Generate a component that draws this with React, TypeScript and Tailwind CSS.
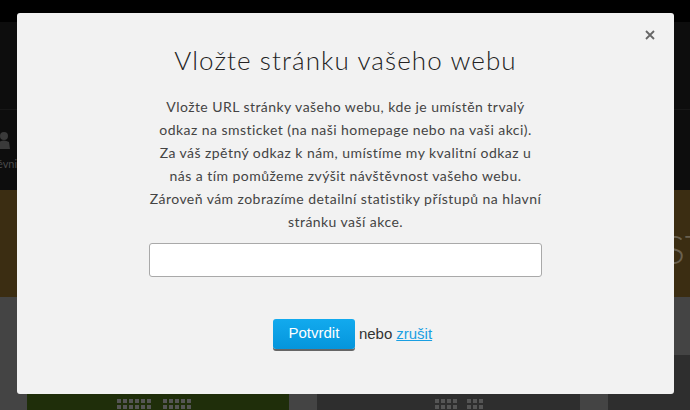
import React from "react";

const Dots = ({ cols, rows }: { cols: number; rows: number }) => (
  <div className="flex flex-col gap-[2px]">
    {Array.from({ length: rows }).map((_, r) => (
      <div key={r} className="flex gap-[2px]">
        {Array.from({ length: cols }).map((_, c) => (
          <div key={c} className="w-[4px] h-[4px] bg-[#555]" />
        ))}
      </div>
    ))}
  </div>
);

export default function App() {
  return (
    <div className="relative w-[690px] h-[410px] overflow-hidden bg-black" style={{ fontFamily: "Lato, 'Open Sans', sans-serif" }}>
      {/* background page */}
      <div className="flex flex-col w-full h-full">
        <div className="h-[22px] bg-black shrink-0" />
        <div className="h-[88px] bg-[#0d0d0d] border-b border-[#171717] shrink-0" />
        <div className="h-[80px] bg-[#0d0d0d] shrink-0 flex flex-col pt-[21px] pl-0">
          <svg width="12" height="18" viewBox="0 0 12 18" className="ml-[-2px]">
            <circle cx="6" cy="5" r="4" fill="#3a3a3a" />
            <path d="M0 18 L1 11 Q6 8 11 11 L12 18 Z" fill="#3a3a3a" />
          </svg>
          <span className="text-[11px] text-[#4a4a4a] mt-[9px] ml-[-3px] leading-none">évni</span>
        </div>
        <div className="h-[107px] bg-[#3b2d12] shrink-0 flex items-center justify-end">
          <span className="text-[40px] text-[#6a6150] mr-[-18px] font-light leading-none mt-[10px]">ST</span>
        </div>
        <div className="flex-1 bg-[#444] flex gap-[28px] pl-[27px] pt-[58px]">
          <div className="w-[262px] bg-[#1f2e0a] flex items-end pl-[90px] pb-[1px] gap-[12px]">
            <Dots cols={6} rows={2} />
            <Dots cols={5} rows={2} />
          </div>
          <div className="w-[263px] bg-[#2e2e2e] flex items-end pl-[118px] pb-[1px] gap-[10px]">
            <Dots cols={4} rows={2} />
            <Dots cols={3} rows={2} />
          </div>
          <div className="flex-1 bg-[#2e2e2e]" />
        </div>
      </div>

      {/* modal */}
      <div className="absolute left-[17px] top-[13px] w-[657px] h-[381px] bg-[#f2f2f2] rounded-[3px] flex flex-col items-center">
        <button className="absolute right-[18px] top-[16px] text-[#666] w-[12px] h-[12px] flex items-center justify-center">
          <svg width="10" height="10" viewBox="0 0 10 10">
            <path d="M1 1 L9 9 M9 1 L1 9" stroke="#666" strokeWidth="1.8" />
          </svg>
        </button>
        <h1 className="mt-[31px] text-[26px] leading-[32px] font-light text-[#222] tracking-[1.1px]">
          Vložte stránku vašeho webu
        </h1>
        <p className="mt-[19px] w-[400px] text-center text-[14px] leading-[23px] text-[#444] tracking-[0.45px] whitespace-nowrap">
          Vložte URL stránky vašeho webu, kde je umístěn trvalý<br />
          odkaz na smsticket (na naši homepage nebo na vaši akci).<br />
          Za váš zpětný odkaz k nám, umístíme my kvalitní odkaz u<br />
          nás a tím pomůžeme zvýšit návštěvnost vašeho webu.<br />
          Zároveň vám zobrazíme detailní statistiky přístupů na hlavní<br />
          stránku vaší akce.
        </p>
        <input
          type="text"
          className="mt-[10px] w-[393px] h-[34px] bg-white border border-[#a9a9a9] rounded-[3px] outline-none px-2"
        />
        <div className="mt-[42px] flex items-center ml-[14px]" style={{ fontFamily: "'Liberation Sans', Arial, sans-serif" }}>
          <button className="w-[82px] h-[30px] rounded-[3px] text-white text-[15px] bg-gradient-to-b from-[#12aaee] to-[#0595dc] shadow-[0_2px_0_#666] pb-[1px]">
            Potvrdit
          </button>
          <span className="ml-[4px] text-[15px] text-[#333]">nebo</span>
          <a className="ml-[4px] text-[15px] text-[#1a9fe2] underline">zrušit</a>
        </div>
      </div>
    </div>
  );
}
